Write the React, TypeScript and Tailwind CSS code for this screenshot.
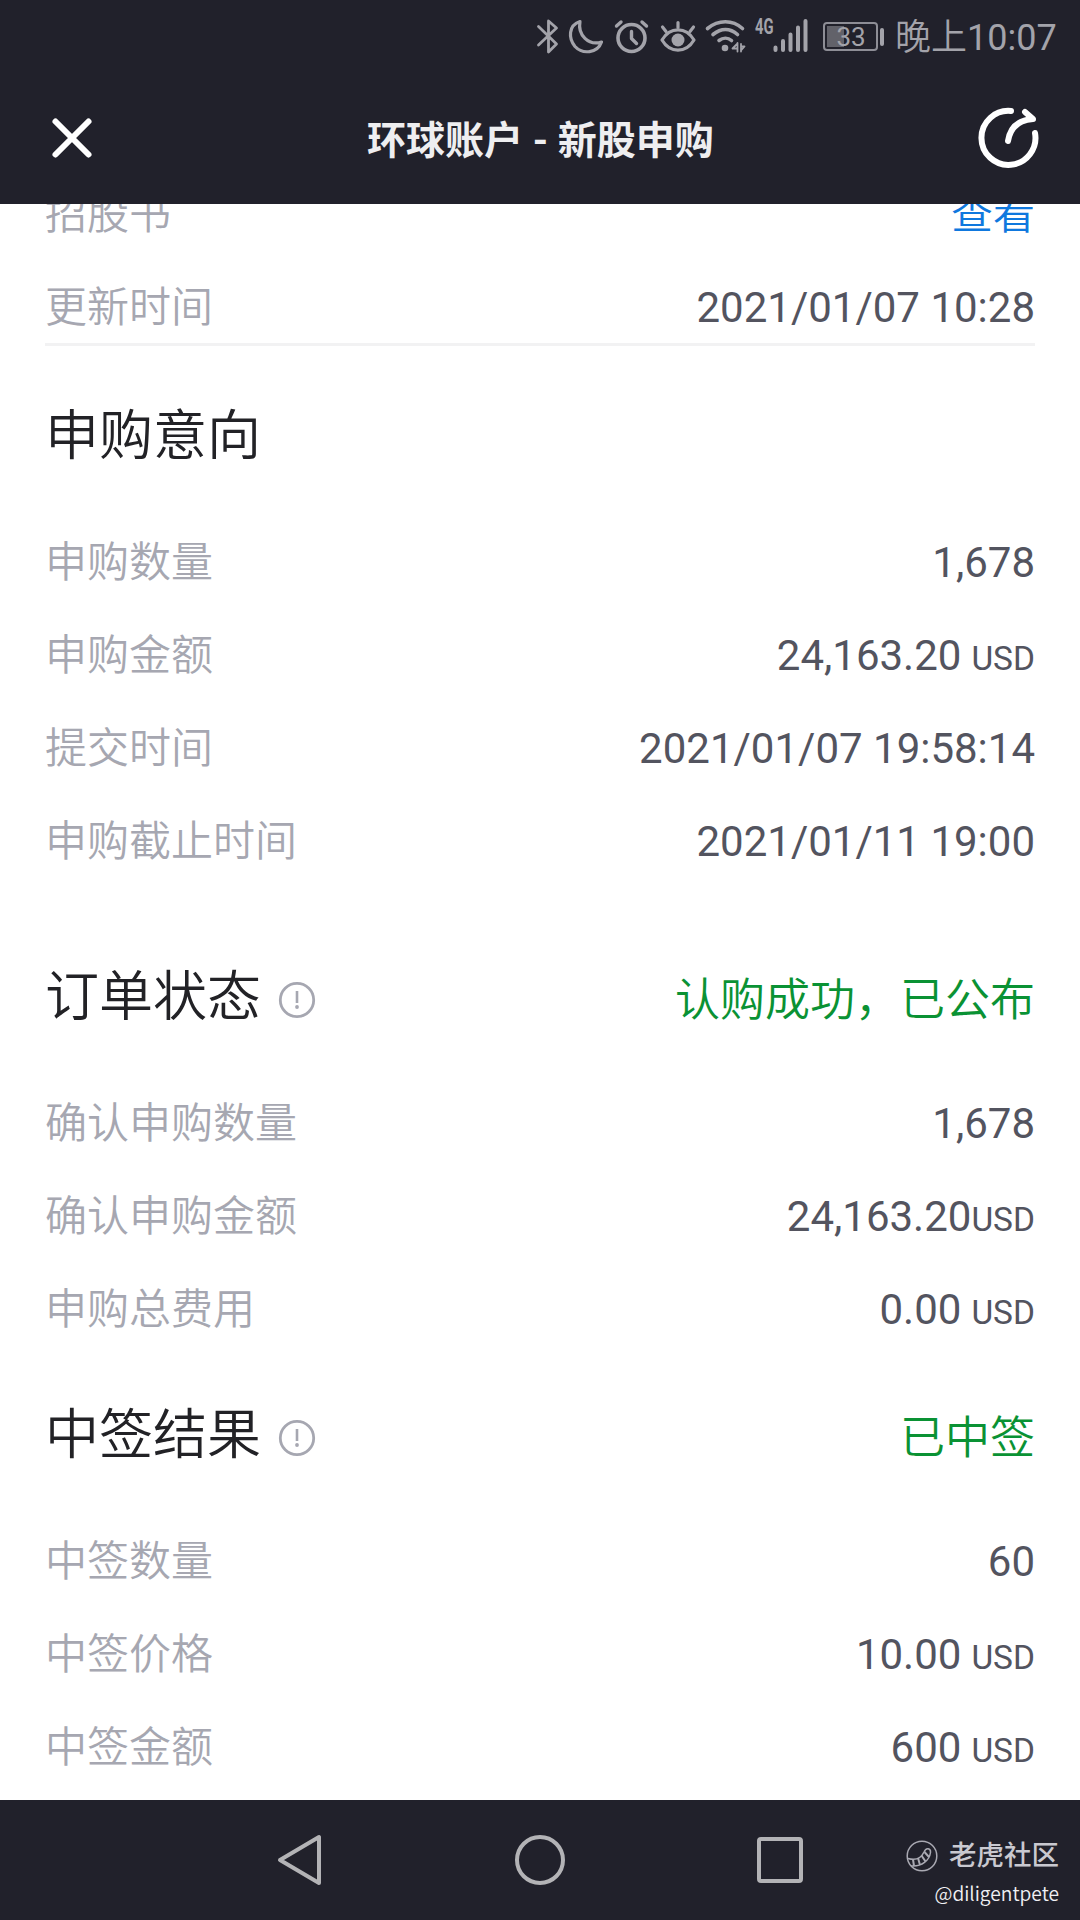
import type { ReactNode } from "react";

interface Item {
  label: string;
  value: string;
  unit?: string;
  tight?: boolean;
}

const intention: Item[] = [
  { label: "申购数量", value: "1,678" },
  { label: "申购金额", value: "24,163.20", unit: "USD" },
  { label: "提交时间", value: "2021/01/07 19:58:14" },
  { label: "申购截止时间", value: "2021/01/11 19:00" },
];

const order: Item[] = [
  { label: "确认申购数量", value: "1,678" },
  { label: "确认申购金额", value: "24,163.20", unit: "USD", tight: true },
  { label: "申购总费用", value: "0.00", unit: "USD" },
];

const result: Item[] = [
  { label: "中签数量", value: "60" },
  { label: "中签价格", value: "10.00", unit: "USD" },
  { label: "中签金额", value: "600", unit: "USD" },
];

const Row = ({ label, children }: { label: string; children: ReactNode }) => (
  <div className="flex h-[93px] shrink-0 items-center justify-between text-[42px] leading-[60px]">
    <span className="pt-px font-[350] text-[#a6a7b1]">{label}</span>
    <span className="text-[#53545f]">{children}</span>
  </div>
);

const Rows = ({ items }: { items: Item[] }) => (
  <>
    {items.map((item) => (
      <Row key={item.label} label={item.label}>
        {item.value}
        {item.unit && (
          <span className={item.tight ? "text-[33.5px] leading-none" : "ml-[10px] text-[33.5px] leading-none"}>
            {item.unit}
          </span>
        )}
      </Row>
    ))}
  </>
);

const Heading = ({ title, status }: { title: string; status?: string }) => (
  <div className="mb-[38px] flex h-[80px] shrink-0 items-center justify-between">
    <div className="flex items-center">
      <h2 className="pb-[2px] text-[54px] leading-[78px] font-[350] text-[#222226]">{title}</h2>
      {status && (
        <svg className="mt-[2px] ml-[17px]" width="38" height="38" viewBox="0 0 38 38" fill="none">
          <circle cx="19" cy="19" r="16.7" stroke="#a6a7b1" strokeWidth="2.8" />
          <path d="M19 10v12" stroke="#a6a7b1" strokeWidth="2.6" />
          <circle cx="19" cy="26" r="1.9" fill="#a6a7b1" />
        </svg>
      )}
    </div>
    {status && (
      <span className="mt-[4px] text-[45px] leading-[60px] font-[350] text-[#0a9234]">{status}</span>
    )}
  </div>
);

const StatusBar = () => (
  <div className="flex h-[72px] shrink-0 items-center pl-[530px] text-[#a3a3aa]">
    <svg
      width="280"
      height="72"
      viewBox="530 0 280 72"
      fill="none"
      stroke="currentColor"
      strokeWidth="3.2"
      strokeLinecap="round"
      strokeLinejoin="round"
    >
      <path d="M538.5 26.5l18 17.5-8 8V21l8 7-18 17" strokeWidth="2.8" />
      <path d="M580 21.5c-12 4-11.5 17-5 25 7.500 8 22.500 7 26.500-4.500-13 4-24-7-21.500-20.500z" />
      <circle cx="631.5" cy="38" r="13.5" strokeWidth="3.6" />
      <path d="M631.5 31.5v7l5 5M616.5 26l4.500-4M646.5 26l-4.500-4" strokeWidth="3.4" />
      <path d="M662 40c8-13.500 24-13.500 32 0-8 13.500-24 13.500-32 0z" />
      <circle cx="678" cy="40" r="6.5" fill="currentColor" stroke="none" />
      <path d="M678 22.5v5M662.5 27l3.500 4.500M693.5 27l-3.500 4.500" />
      <path
        d="M707.5 28.5c11-9 25-9 35 0M713 34.5c8-6.500 17-6.500 24.500 0M719 40.5c4-3 9-3 12.500 0"
        strokeWidth="3.6"
      />
      <circle cx="725" cy="48" r="3.3" fill="currentColor" stroke="none" />
      <path d="M737.5 43v8.500M737 44l-4.500 4.500h5M741 44v7.500M741 50.500l3.500-4h-3" strokeWidth="1.8" />
      <path d="M775.5 47.500v2.500M783 41v9M790.5 34.500v15.500M798 27.500v22.500M805.5 21v29" strokeWidth="4" />
      <text
        x="755"
        y="34"
        fill="currentColor"
        stroke="none"
        fontSize="21.5"
        fontWeight="700"
        textLength="18.5"
        lengthAdjust="spacingAndGlyphs"
      >
        4G
      </text>
    </svg>
    <div className="ml-[13px] flex items-center pt-px">
      <div className="relative flex h-[29px] w-[55px] items-center justify-center rounded-[4px] border-2 border-[#8e8e96] text-[26px] leading-none">
        <div className="absolute top-[2px] left-[2px] h-[21px] w-[17px] bg-[#62626a]" />
        <span className="relative pt-px pl-px">33</span>
      </div>
      <div className="ml-[2px] h-[18px] w-[4px] rounded-full bg-current" />
    </div>
    <span className="mt-[5px] ml-[11px] text-[36px] leading-[67px] font-[350] whitespace-nowrap">
      晚上<span className="font-normal">10:07</span>
    </span>
  </div>
);

const TitleBar = () => (
  <div className="flex h-[132px] shrink-0 items-center justify-between pr-[40px] pl-[50px]">
    <svg width="44" height="44" viewBox="0 0 44 44" stroke="#fff" strokeWidth="6" strokeLinecap="round">
      <path d="M5.5 5.5l33 33M38.5 5.5l-33 33" />
    </svg>
    <h1 className="mt-[6px] ml-[11px] text-[39px] leading-[60px] font-bold text-[#eeeef0]">
      环球账户 - 新股申购
    </h1>
    <svg
      width="64"
      height="64"
      viewBox="0 0 64 64"
      fill="none"
      stroke="#fff"
      strokeWidth="6"
      strokeLinecap="round"
      strokeLinejoin="round"
    >
      <path d="M35 5A27 27 0 1 0 59 27" />
      <path d="M32 35c2-13 10-21 25-22l-8-7" />
    </svg>
  </div>
);

const NavBar = () => (
  <div className="flex h-[120px] shrink-0 items-center bg-[#21212b]">
    <svg
      className="ml-[276px]"
      width="48"
      height="54"
      viewBox="0 0 48 54"
      fill="none"
      stroke="#b3b3b6"
      strokeWidth="4"
      strokeLinejoin="round"
    >
      <path d="M43 4v46L4 27z" />
    </svg>
    <div className="ml-[191px] size-[50px] rounded-full border-4 border-[#b3b3b6]" />
    <div className="ml-[192px] size-[46px] rounded-[4px] border-4 border-[#b3b3b6]" />
    <div className="ml-auto flex flex-col items-end pt-[26px] pr-[21px]">
      <div className="flex items-center">
        <svg width="32" height="32" viewBox="0 0 32 32" fill="none" stroke="#a9a9b2" strokeWidth="1.5">
          <circle cx="16" cy="16" r="14.8" />
          <path d="M2 18.5c7 2 13 0 16-6.500 2-5 7-4 6.500.5C23.5 20 16 27 5 26" />
          <path d="M7 19.5l1 6.500M12 18l2 7M15.5 15.5l4 6M18.5 12l4.500 5" strokeWidth="2" />
        </svg>
        <span className="ml-[11px] text-[27.5px] leading-[40px] font-medium text-[#c9c9d0]">老虎社区</span>
      </div>
      <span className="font-['Noto_Sans_CJK_SC',sans-serif] text-[19.2px] leading-[34px] font-[350] text-[#f0f0f4]">
        @diligentpete
      </span>
    </div>
  </div>
);

const App: React.FC = () => {
  return (
    <div className="flex h-[1920px] w-[1080px] flex-col overflow-hidden bg-white font-[Roboto,'Noto_Sans_CJK_SC',sans-serif]">
      <header className="shrink-0 bg-[#21212b]">
        <StatusBar />
        <TitleBar />
      </header>
      <main className="flex min-h-0 flex-1 flex-col overflow-hidden px-[45px]">
        {/* scrolled list, first row sits partly under the header */}
        <div className="-mt-[36px] h-[178px] shrink-0 border-b-[3px] border-[#f2f2f3]">
          <Row label="招股书">
            <span className="font-[350] text-[#0f78de]">查看</span>
          </Row>
          <Row label="更新时间">2021/01/07 10:28</Row>
        </div>
        <section className="mt-[52px]">
          <Heading title="申购意向" />
          <Rows items={intention} />
        </section>
        <section className="mt-[71px]">
          <Heading title="订单状态" status="认购成功，已公布" />
          <Rows items={order} />
        </section>
        <section className="mt-[41px]">
          <Heading title="中签结果" status="已中签" />
          <Rows items={result} />
        </section>
      </main>
      <NavBar />
    </div>
  );
};

export default App;
